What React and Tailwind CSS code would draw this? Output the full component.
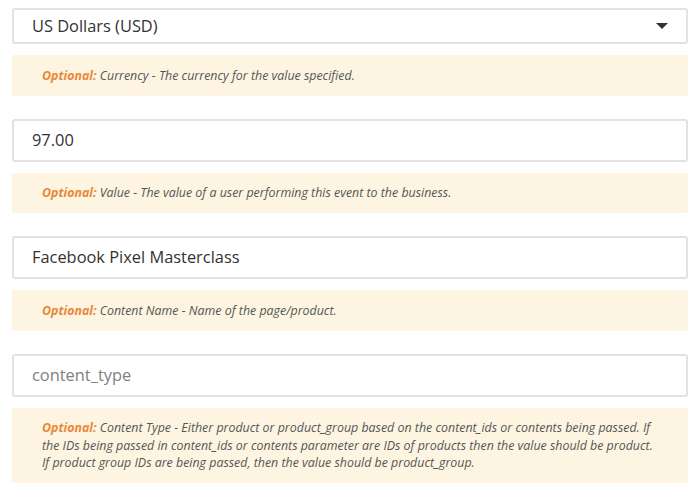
import React from "react";

const fields = [
  {
    kind: "select",
    value: "US Dollars (USD)",
    note: "Currency - The currency for the value specified.",
  },
  {
    kind: "input",
    value: "97.00",
    note: "Value - The value of a user performing this event to the business.",
  },
  {
    kind: "input",
    value: "Facebook Pixel Masterclass",
    note: "Content Name - Name of the page/product.",
  },
  {
    kind: "input",
    placeholder: "content_type",
    note:
      "Content Type - Either product or product_group based on the content_ids or contents being passed. If the IDs being passed in content_ids or contents parameter are IDs of products then the value should be product. If product group IDs are being passed, then the value should be product_group.",
  },
];

const Field = ({ field }) => {
  return (
    <div className="mb-[23px]">
      {field.kind === "select" ? (
        <div className="h-[36px] flex items-center justify-between border-2 border-[#e2e2e2] rounded-[3px] bg-white pl-[18px] pr-[18px] text-[16.4px] text-[#333]">
          <span>{field.value}</span>
          <svg width="12" height="7" viewBox="0 0 12 7">
            <path d="M0 0 L12 0 L6 6 Z" fill="#333" />
          </svg>
        </div>
      ) : (
        <div className="h-[43px] flex items-center border-2 border-[#e2e2e2] rounded-[3px] bg-white px-[18px] text-[16.4px]">
          {field.value ? (
            <span className="text-[#333]">{field.value}</span>
          ) : (
            <span className="text-[#808080]">{field.placeholder}</span>
          )}
        </div>
      )}

      {/* Help note */}
      <div className="mt-[11px] bg-[#fdf5e1] rounded-[2px] pl-[30px] pr-[32px] py-[11.5px] text-[12.4px] leading-[17.5px] italic text-[#555]">
        <span className="font-bold text-[#e8893a]">Optional:</span> {field.note}
      </div>
    </div>
  );
};

export default function App() {
  return (
    <div
      className="bg-white w-[700px] h-[492px] overflow-hidden px-[12px] pt-[8px]"
      style={{ fontFamily: '"Open Sans", sans-serif' }}
    >
      {fields.map((field, index) => (
        <Field key={index} field={field} />
      ))}
    </div>
  );
}
